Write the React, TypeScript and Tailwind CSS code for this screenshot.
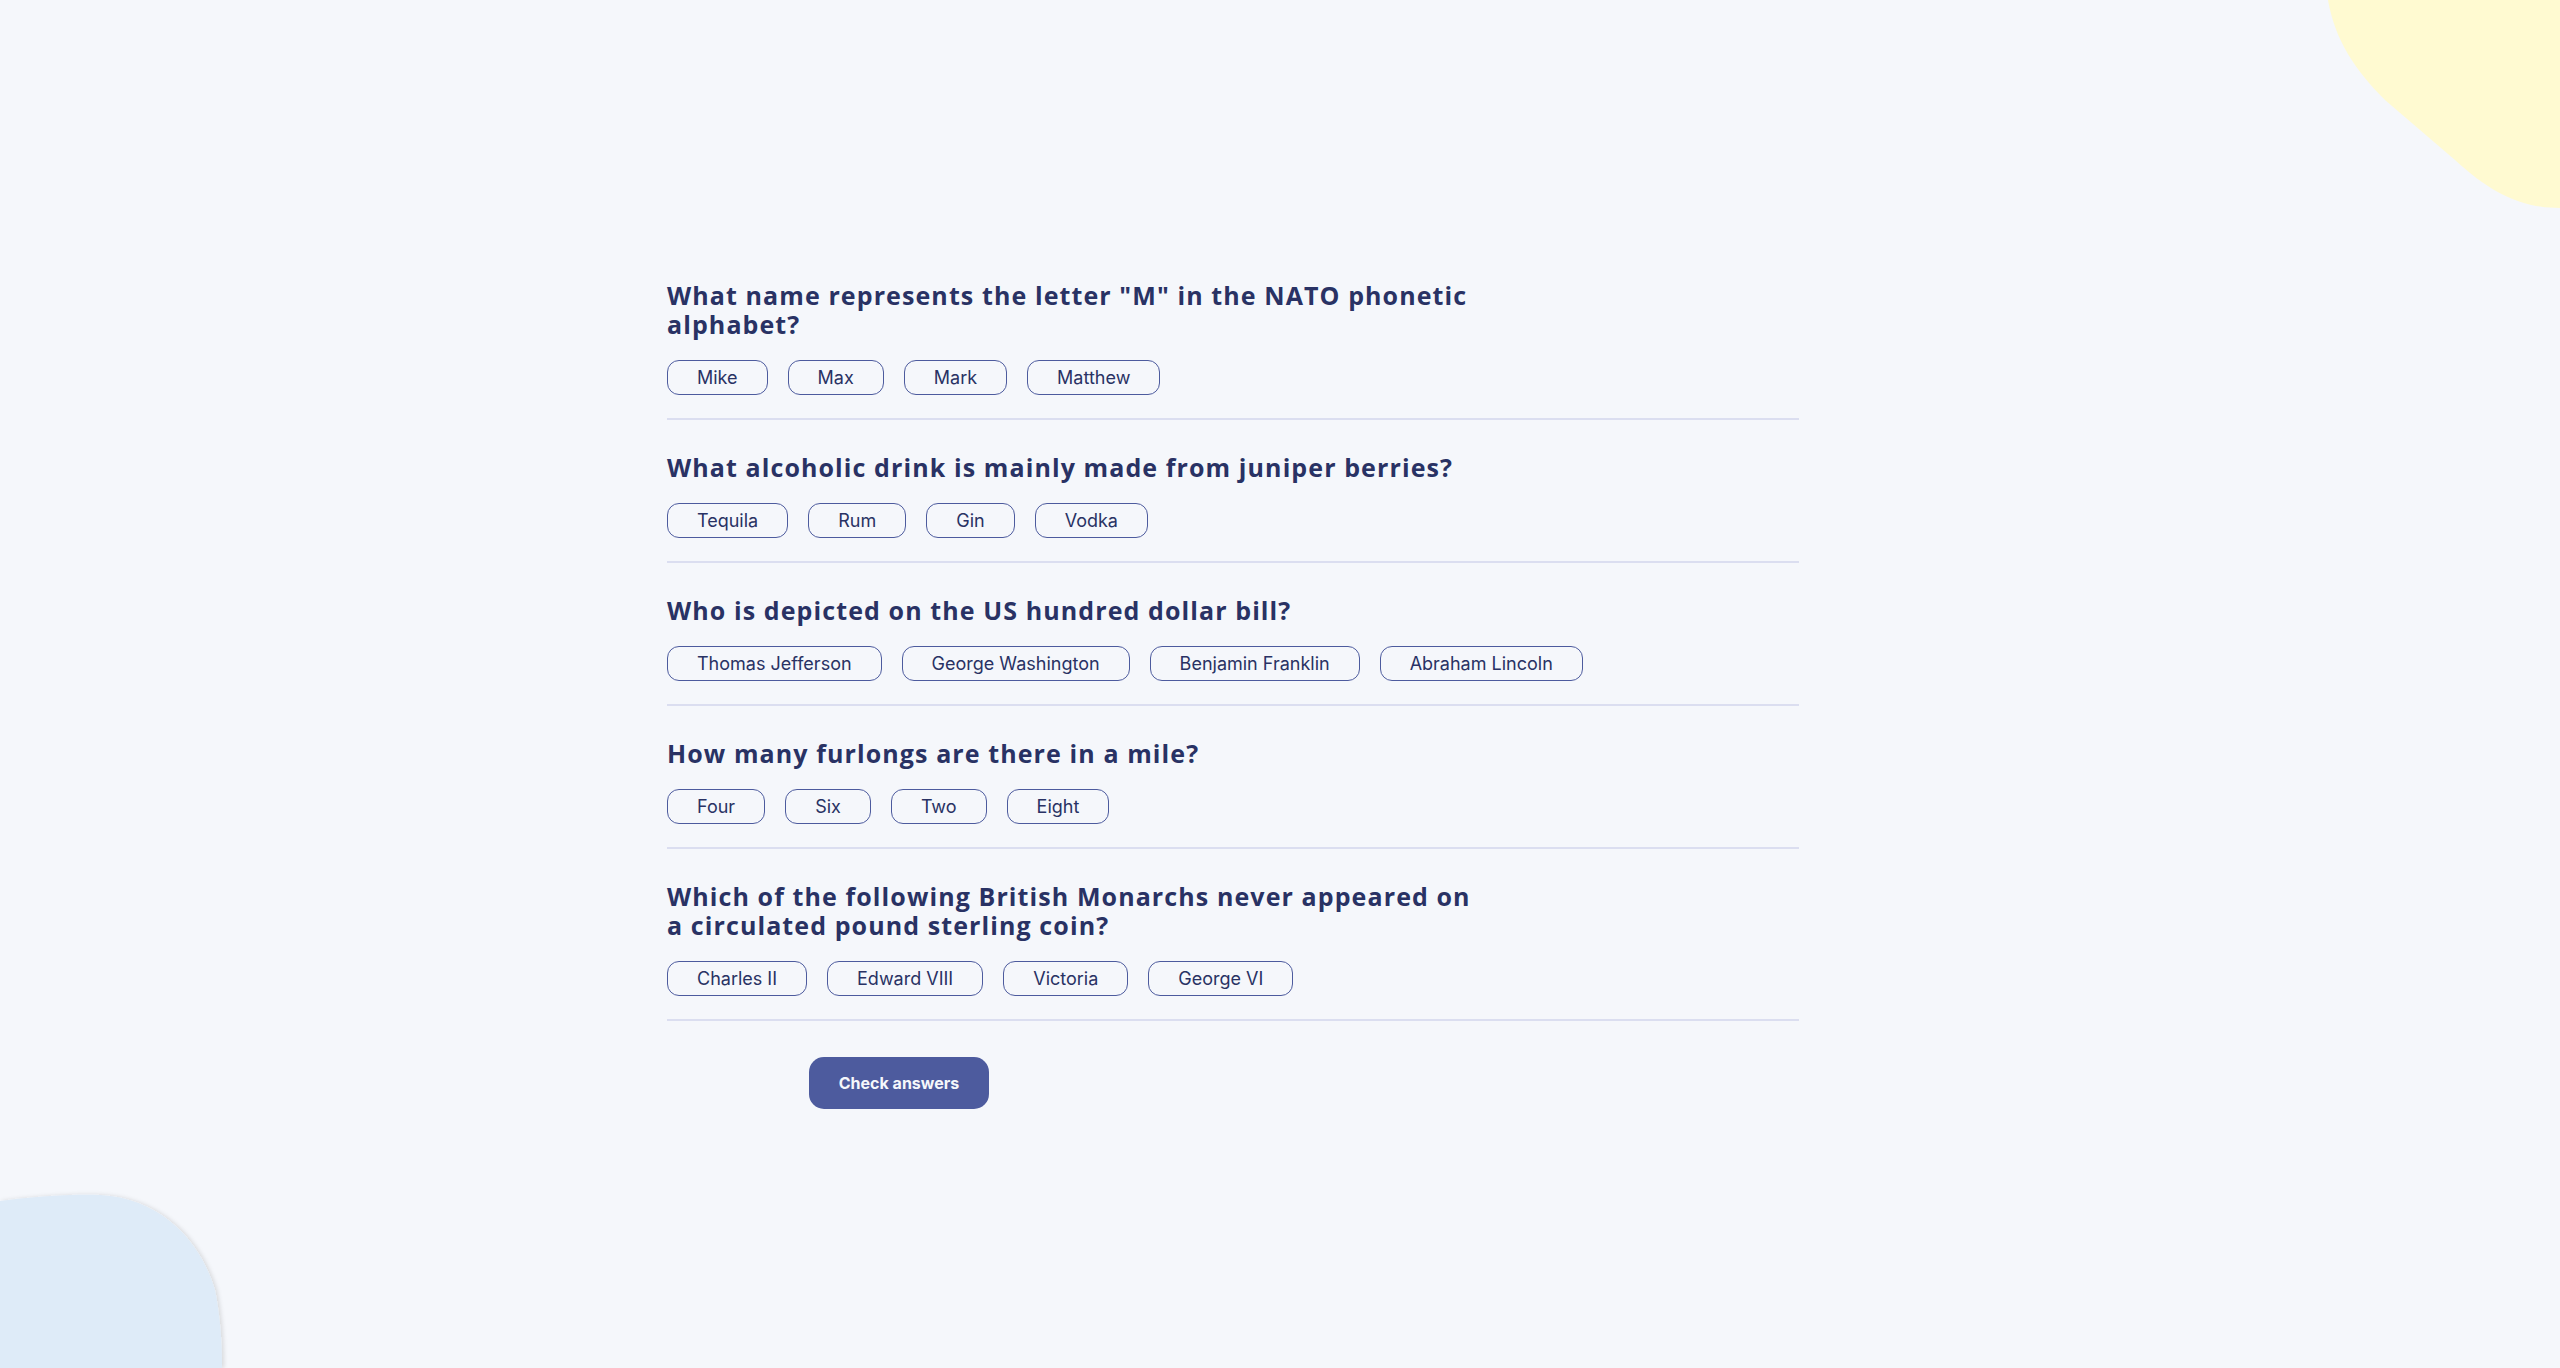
import React from "react";

const questions: { q: string; a: string[] }[] = [
  { q: 'What name represents the letter "M" in the NATO phonetic alphabet?', a: ["Mike", "Max", "Mark", "Matthew"] },
  { q: "What alcoholic drink is mainly made from juniper berries?", a: ["Tequila", "Rum", "Gin", "Vodka"] },
  { q: "Who is depicted on the US hundred dollar bill?", a: ["Thomas Jefferson", "George Washington", "Benjamin Franklin", "Abraham Lincoln"] },
  { q: "How many furlongs are there in a mile?", a: ["Four", "Six", "Two", "Eight"] },
  { q: "Which of the following British Monarchs never appeared on a circulated pound sterling coin?", a: ["Charles II", "Edward VIII", "Victoria", "George VI"] },
];

export default function App() {
  return (
    <div className="relative min-h-[1368px] w-full overflow-hidden bg-[#F5F7FB]">
      <svg className="absolute left-0 top-0 pointer-events-none" width="2560" height="1368" viewBox="0 0 2560 1368">
        <defs>
          <filter id="sh" x="-20%" y="-20%" width="140%" height="140%">
            <feDropShadow dx="2" dy="0" stdDeviation="2" floodColor="#000" floodOpacity="0.12" />
          </filter>
        </defs>
        <path d="M2328 0 C2335 40 2355 70 2385 100 L2455 160 C2490 192 2520 208 2560 208 V0 Z" fill="#FFFAD1" />
        <path d="M0 1201 C30 1197 70 1194 100 1195 C160 1198 200 1240 215 1290 C221 1320 222 1350 222 1368 L0 1368 Z" fill="#DEEBF8" filter="url(#sh)" />
      </svg>
      <div className="relative pl-[667px] pt-[248px]">
        <div className="w-[1132px]">
          {questions.map((item, i) => (
            <div key={i} className="border-b-2 border-[#DBDEF0] pt-[33px] pb-[23px]">
              <h2
                className="max-w-[815px] text-[25px] leading-[29px] font-bold text-[#293264] tracking-[1.1px]"
                style={{ fontFamily: '"Open Sans", sans-serif' }}
              >
                {item.q}
              </h2>
              <div className="mt-[21px] flex gap-[20px]">
                {item.a.map((ans) => (
                  <button
                    key={ans}
                    className="flex h-[35px] items-center rounded-[12px] border border-[#4D5B9E] px-[29px] text-[18px] font-normal text-[#293264]"
                    style={{ fontFamily: "Inter, sans-serif" }}
                  >
                    {ans}
                  </button>
                ))}
              </div>
            </div>
          ))}
          <button
            className="ml-[142px] mt-[36px] flex h-[52px] w-[180px] items-center justify-center rounded-[15px] bg-[#4D5B9E] text-[16px] font-bold text-[#F5F7FB]"
            style={{ fontFamily: "Inter, sans-serif" }}
          >
            Check answers
          </button>
        </div>
      </div>
    </div>
  );
}
